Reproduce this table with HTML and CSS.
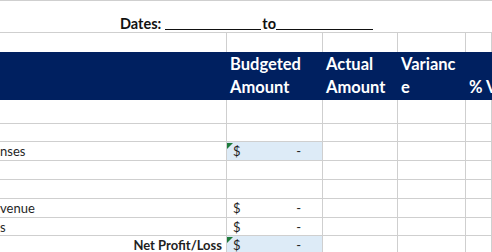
FILE: index.html
```html
<!DOCTYPE html>
<html>
<head>
<meta charset="utf-8">
<link rel="stylesheet" href="styles.css">
</head>
<body>
<div class="sheet">
  <div class="rule"></div>
  <div class="title">
    <span class="word">Dates:</span><span class="blank first"></span><span class="word">to</span><span class="blank"></span>
  </div>
  <div class="row gap-row">
    <div class="c"></div><div class="c"></div><div class="c"></div><div class="c"></div><div class="c"></div>
  </div>
  <div class="row head">
    <div class="h"></div>
    <div class="h">Budgeted Amount</div>
    <div class="h">Actual Amount</div>
    <div class="h h-wrap">Variance</div>
    <div class="h h-nowrap">% Variance</div>
  </div>
  <div class="row tall">
    <div class="c"></div><div class="c"></div><div class="c"></div><div class="c"></div><div class="c"></div>
  </div>
  <div class="row r18">
    <div class="c"></div><div class="c"></div><div class="c"></div><div class="c"></div><div class="c"></div>
  </div>
  <div class="row">
    <div class="c lab">nses</div>
    <div class="c money blue flag"><span>$</span><span>-</span></div>
    <div class="c"></div><div class="c"></div><div class="c"></div>
  </div>
  <div class="row">
    <div class="c"></div><div class="c"></div><div class="c"></div><div class="c"></div><div class="c"></div>
  </div>
  <div class="row">
    <div class="c"></div><div class="c"></div><div class="c"></div><div class="c"></div><div class="c"></div>
  </div>
  <div class="row">
    <div class="c lab">venue</div>
    <div class="c money"><span>$</span><span>-</span></div>
    <div class="c"></div><div class="c"></div><div class="c"></div>
  </div>
  <div class="row r18">
    <div class="c lab">s</div>
    <div class="c money"><span>$</span><span>-</span></div>
    <div class="c"></div><div class="c"></div><div class="c"></div>
  </div>
  <div class="row">
    <div class="c lab total">Net Profit/Loss</div>
    <div class="c money blue flag"><span>$</span><span>-</span></div>
    <div class="c"></div><div class="c"></div><div class="c"></div>
  </div>
</div>
</body>
</html>
```

FILE: styles.css
```css
html, body {
  margin: 0;
  padding: 0;
  background: #ffffff;
  overflow: hidden;
}

.sheet {
  width: 492px;
  height: 252px;
  overflow: hidden;
  font-family: Lato, "Liberation Sans", sans-serif;
  color: #1f1f1f;
}

.rule {
  height: 1px;
  background: #cfcfcf;
}

.title {
  height: 31px;
  border-bottom: 1px solid #cfcfcf;
  display: flex;
  justify-content: center;
  align-items: flex-end;
  font-weight: 700;
  font-size: 14.5px;
  line-height: 16px;
  white-space: nowrap;
  color: #111;
  padding-left: 1px;
}

.word {
  display: inline-block;
}

.blank {
  display: inline-block;
  width: 97px;
  height: 14px;
  margin-bottom: 2px;
  border-bottom: 1.5px solid #111;
}

.blank.first {
  width: 96px;
  margin-left: 4px;
  margin-right: 1px;
}

.row {
  display: grid;
  grid-template-columns: 227px 96px 75px 68px 1fr;
  height: 19px;
}

.row.r18 { height: 18px; }
.row.gap-row { height: 19px; }
.row.tall { height: 24px; }

.c {
  border-right: 1px solid #cfcfcf;
  border-bottom: 1px solid #cfcfcf;
  position: relative;
  font-size: 13px;
  line-height: 18px;
  white-space: nowrap;
  overflow: hidden;
}

.gap-row .c {
  border-bottom: none;
}

.head {
  height: 48px;
  background: #002060;
}

.h {
  color: #ffffff;
  font-weight: 700;
  font-size: 16.5px;
  line-height: 23px;
  padding: 0 2px 1px 3px;
  display: flex;
  align-items: flex-end;
  overflow: hidden;
}

.h-wrap {
  word-break: break-all;
  padding-right: 8px;
}

.h-nowrap {
  white-space: nowrap;
}

.lab {
  text-align: left;
  padding-left: 0;
}

.lab.total {
  text-align: right;
  font-weight: 700;
  padding-right: 4px;
}

.money {
  display: flex;
  justify-content: space-between;
  padding: 0 21px 0 6px;
}

.blue {
  background: #ddebf7;
}

.flag::before {
  content: "";
  position: absolute;
  left: 0;
  top: 1px;
  width: 0;
  height: 0;
  border-top: 6px solid #1e7b3c;
  border-right: 6px solid transparent;
}
```
